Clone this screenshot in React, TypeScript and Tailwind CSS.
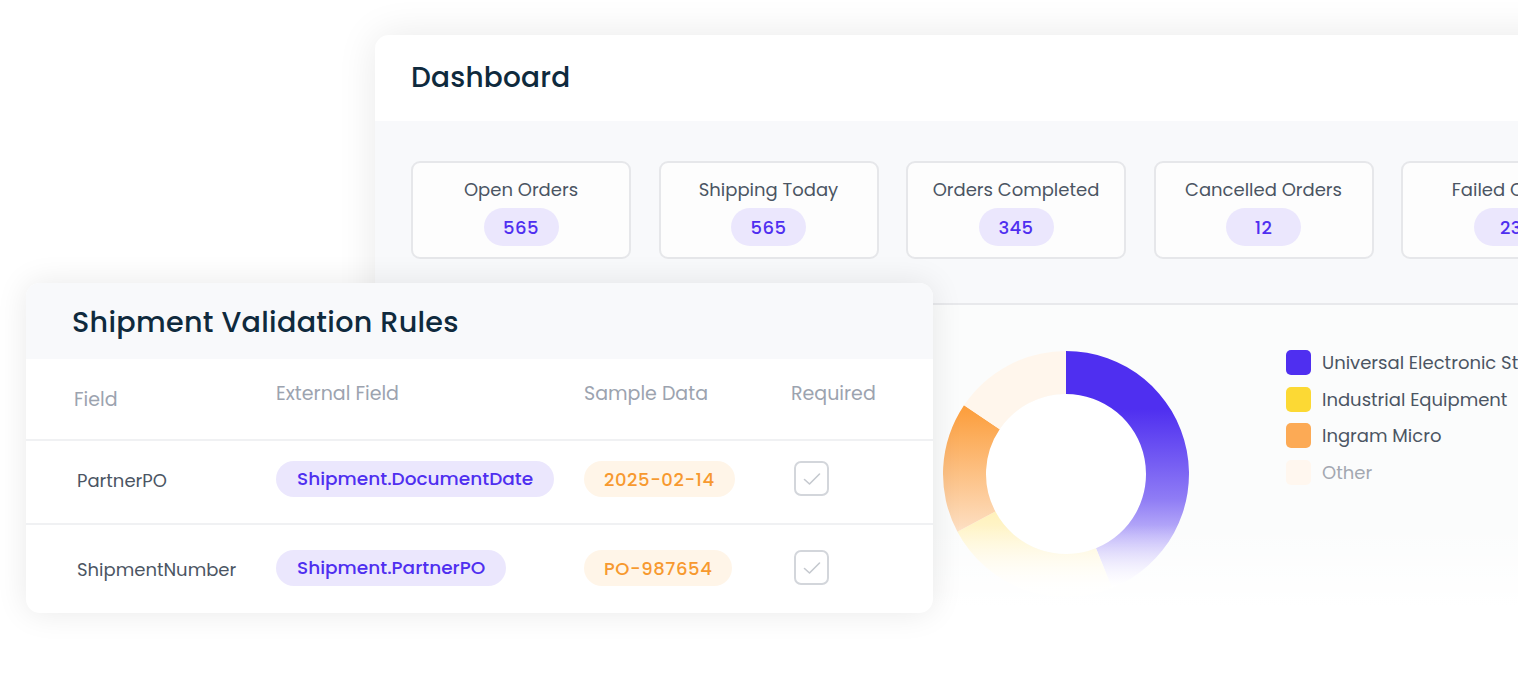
const stats = [
  { label: "Open Orders", value: "565" },
  { label: "Shipping Today", value: "565" },
  { label: "Orders Completed", value: "345" },
  { label: "Cancelled Orders", value: "12" },
  { label: "Failed Orders", value: "23" },
];

const legend = [
  { name: "Universal Electronic Stores", color: "bg-[#4f2ff0]", text: "text-[#4b5563]" },
  { name: "Industrial Equipment", color: "bg-[#fcd934]", text: "text-[#4b5563]" },
  { name: "Ingram Micro", color: "bg-[#fcaa55]", text: "text-[#4b5563]" },
  { name: "Other", color: "bg-[#fff7ef]", text: "text-[#a3a8b1]" },
];

const rows = [
  { field: "PartnerPO", external: "Shipment.DocumentDate", sample: "2025-02-14", h: "h-[84px]", pt: "pt-[20px]" },
  { field: "ShipmentNumber", external: "Shipment.PartnerPO", sample: "PO-987654", h: "h-[88px]", pt: "pt-[25px]" },
];

function Donut() {
  return (
    <svg width="250" height="250" viewBox="0 0 250 250" className="shrink-0">
      <defs>
        <linearGradient id="gBlue" gradientUnits="userSpaceOnUse" x1="0" y1="0" x2="0" y2="250">
          <stop offset="0.24" stopColor="#4f2ff0" />
          <stop offset="0.6" stopColor="#8f7cf5" />
          <stop offset="0.95" stopColor="#ffffff" />
        </linearGradient>
        <linearGradient id="gYellow" gradientUnits="userSpaceOnUse" x1="0" y1="0" x2="0" y2="250">
          <stop offset="0.62" stopColor="#fff0b4" />
          <stop offset="0.95" stopColor="#fffefa" />
        </linearGradient>
        <linearGradient id="gOrange" gradientUnits="userSpaceOnUse" x1="0" y1="0" x2="0" y2="250">
          <stop offset="0.22" stopColor="#fc9c38" />
          <stop offset="0.75" stopColor="#fde2c9" />
        </linearGradient>
      </defs>
      <circle cx="125" cy="125" r="80" fill="#ffffff" />
      <path d="M125 2 A123 123 0 0 1 171.08 239.04 L154.97 199.18 A80 80 0 0 0 125 45 Z" fill="url(#gBlue)" />
      <path d="M171.08 239.04 A123 123 0 0 1 16.4 182.75 L54.37 162.56 A80 80 0 0 0 154.97 199.18 Z" fill="url(#gYellow)" />
      <path d="M16.4 182.75 A123 123 0 0 1 23.03 56.22 L58.68 80.26 A80 80 0 0 0 54.37 162.56 Z" fill="url(#gOrange)" />
      <path d="M23.03 56.22 A123 123 0 0 1 125 2 L125 45 A80 80 0 0 0 58.68 80.26 Z" fill="#fff6ec" />
    </svg>
  );
}

function CheckBox() {
  return (
    <div className="flex h-[35px] w-[35px] items-center justify-center rounded-[7px] border-2 border-[#d3d6db] bg-white">
      <svg width="18" height="14" viewBox="0 0 18 14" fill="none">
        <path d="M1.5 7.5 L6.5 12 L16.5 2" stroke="#c5c9cf" strokeWidth="1.6" strokeLinecap="round" strokeLinejoin="round" />
      </svg>
    </div>
  );
}

export default function App() {
  return (
    <div className="relative h-[674px] w-[1518px] overflow-hidden bg-white font-['Poppins','Inter',sans-serif]">
      {/* dashboard window */}
      <div className="absolute left-[375px] top-[35px] h-[700px] w-[1300px] overflow-hidden rounded-[14px] bg-white shadow-[0_0_40px_rgba(0,0,0,0.09)]">
        <div className="flex h-[86px] items-center px-[36px]">
          <h1 className="text-[28px] font-medium tracking-[0.2px] text-[#0f2a3d]">Dashboard</h1>
        </div>
        <div className="border-b-2 border-[#e8e9ec] bg-[#f8f9fb] px-[36px] pb-[44px] pt-[40px]">
          <div className="flex gap-[27.5px]">
            {stats.map((s) => (
              <div
                key={s.label}
                className="flex h-[98px] w-[220px] shrink-0 flex-col items-center rounded-[9px] border-2 border-[#e6e7ea] bg-[#fdfdfd] pt-[14px]"
              >
                <span className="whitespace-nowrap text-[18px] leading-[26px] text-[#4b5563]">{s.label}</span>
                <span className="mt-[5px] flex h-[38px] w-[75px] items-center justify-center rounded-full bg-[#ebe7fd] text-[18px] font-medium tracking-[0.4px] text-[#4f2ff0]">
                  {s.value}
                </span>
              </div>
            ))}
          </div>
        </div>
        <div className="flex h-[400px] bg-[#fbfcfc] pl-[566px] pt-[44px]">
          <Donut />
          <div className="ml-[95px] mt-[1px] flex flex-col gap-[11.7px]">
            {legend.map((l) => (
              <div key={l.name} className="flex h-[25px] items-center gap-[11px]">
                <span className={`h-[25px] w-[25px] shrink-0 rounded-[5px] ${l.color}`} />
                <span className={`whitespace-nowrap text-[18px] ${l.text}`}>{l.name}</span>
              </div>
            ))}
          </div>
        </div>
      </div>

      {/* fade of the dashboard window into the page */}
      <div className="absolute inset-x-0 bottom-0 top-[525px] bg-gradient-to-b from-white/0 via-white via-[55%] to-white" />

      {/* shipment validation window */}
      <div className="absolute left-[26px] top-[283px] w-[907px] overflow-hidden rounded-[14px] bg-white shadow-[0_0_32px_rgba(0,0,0,0.09)]">
        <div className="flex h-[76px] items-center bg-[#f8f9fb] px-[46px] pt-[3px]">
          <h2 className="text-[28.6px] font-medium tracking-[0.3px] text-[#0f2a3d]">Shipment Validation Rules</h2>
        </div>
        <div className="grid h-[82px] grid-cols-[202px_308px_207px_1fr] border-b-2 border-[#f0f1f3] pl-[48px] text-[19px] text-[#9ca3af]">
          <span className="pt-[27px]">Field</span>
          <span className="pt-[21px]">External Field</span>
          <span className="pt-[21px]">Sample Data</span>
          <span className="pt-[21px]">Required</span>
        </div>
        {rows.map((r, i) => (
          <div
            key={r.field}
            className={`grid grid-cols-[199px_308px_207px_1fr] pl-[51px] ${r.h} ${r.pt} ${i === 0 ? "border-b-2 border-[#f0f1f3]" : ""}`}
          >
            <span className="flex h-[38px] items-center text-[18px] text-[#4b5563]">{r.field}</span>
            <span className="flex">
              <span className="flex h-[36px] items-center rounded-full bg-[#ebe7fd] px-[21px] text-[18.5px] font-medium text-[#4f2ff0]">
                {r.external}
              </span>
            </span>
            <span className="flex">
              <span className="flex h-[36px] items-center rounded-full bg-[#fff5e8] px-[20px] text-[18px] font-medium tracking-[0.6px] text-[#f7992f]">
                {r.sample}
              </span>
            </span>
            <span className="pl-[3px]">
              <CheckBox />
            </span>
          </div>
        ))}
      </div>
    </div>
  );
}
